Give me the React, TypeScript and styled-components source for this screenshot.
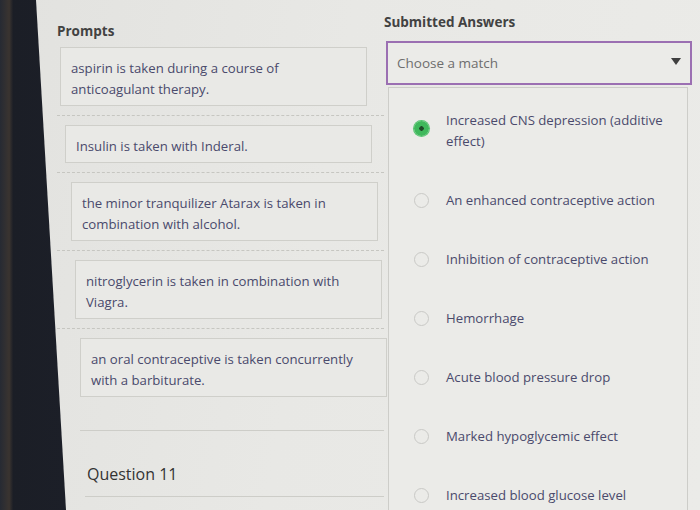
import * as React from "react";
import styled, { createGlobalStyle } from "styled-components";

const GlobalStyle = createGlobalStyle`
  html, body {
    margin: 0;
    padding: 0;
    background: #e6e6e3;
  }
  body {
    font-family: "Open Sans", "Liberation Sans", sans-serif;
  }
`;

const prompts = [
  { text: "aspirin is taken during a course of anticoagulant therapy.", indent: 3 },
  { text: "Insulin is taken with Inderal.", indent: 8 },
  { text: "the minor tranquilizer Atarax is taken in combination with alcohol.", indent: 14 },
  { text: "nitroglycerin is taken in combination with Viagra.", indent: 18 },
  { text: "an oral contraceptive is taken concurrently with a barbiturate.", indent: 23 },
];

const answers = [
  "Increased CNS depression (additive effect)",
  "An enhanced contraceptive action",
  "Inhibition of contraceptive action",
  "Hemorrhage",
  "Acute blood pressure drop",
  "Marked hypoglycemic effect",
  "Increased blood glucose level",
];

const Screen = styled.div`
  display: flex;
  width: 700px;
  height: 510px;
  overflow: hidden;
  background: linear-gradient(100deg, #e2e2df 0%, #e8e8e5 45%, #ebebe8 100%);
`;

const Bezel = styled.div`
  flex: 0 0 66px;
  height: 100%;
  background: linear-gradient(90deg, #262a33 0%, #3a3430 14%, #1b1e26 20%, #1c1f28 100%);
  clip-path: polygon(0 0, 36px 0, 66px 100%, 0 100%);
`;

const Main = styled.div`
  flex: 1;
  margin-left: -30px;
  display: grid;
  grid-template-columns: 348px 1fr;
`;

const LeftColumn = styled.div`
  padding: 22px 0 0 21px;
`;

const RightColumn = styled.div`
  padding-top: 13px;
`;

const Heading = styled.div`
  font-size: 13.5px;
  font-weight: 700;
  line-height: 18px;
  color: #424242;
`;

const PromptList = styled.div`
  margin-top: 7px;
`;

const PromptRow = styled.div<{ $indent: number }>`
  padding-left: ${(p) => p.$indent}px;
  padding-bottom: 9px;
  border-bottom: 1px dashed #c6c6c1;
  margin-bottom: 9px;
`;

const PromptBox = styled.div`
  width: 285px;
  padding: 10px 10px 5px;
  background: #e9e9e6;
  border: 1px solid #cfcfca;
  font-size: 13.2px;
  line-height: 21px;
  color: #4a4a6c;
`;

const LastRow = styled.div<{ $indent: number }>`
  margin-left: ${(p) => p.$indent}px;
  padding-bottom: 33px;
  border-bottom: 1px solid #cdcdc8;
`;

const QuestionRow = styled.div`
  padding: 32px 0 11px 2px;
  margin-left: 28px;
  border-bottom: 1px solid #cdcdc8;
  font-size: 16px;
  line-height: 22px;
  color: #333;
`;

const Select = styled.div`
  margin: 10px 0 0 2px;
  width: 306px;
  height: 44px;
  box-sizing: border-box;
  border: 2px solid #9b6fb2;
  display: flex;
  align-items: center;
  justify-content: space-between;
  padding: 0 9px;
  font-size: 13.5px;
  color: #6e6e6e;
  background: #ebebe8;
`;

const Caret = styled.span`
  width: 0;
  height: 0;
  border-left: 5px solid transparent;
  border-right: 5px solid transparent;
  border-top: 7px solid #3f3f3f;
  margin-bottom: 4px;
`;

const Listbox = styled.div`
  margin: 2px 0 0 4px;
  width: 300px;
  height: 440px;
  box-sizing: border-box;
  padding-top: 3px;
  background: #ebebe8;
  border: 1px solid #cdcdc9;
`;

const Option = styled.div`
  display: flex;
  align-items: center;
  padding: 19px 20px 19px 25px;
  gap: 17px;
  font-size: 13.2px;
  line-height: 21px;
  color: #4a4a6c;
`;

const Radio = styled.span<{ $checked?: boolean }>`
  flex: 0 0 auto;
  width: 15px;
  height: 15px;
  box-sizing: border-box;
  border-radius: 50%;
  border: ${(p) => (p.$checked ? "none" : "1.5px solid #c9c9c6")};
  background: ${(p) =>
    p.$checked ? "radial-gradient(circle, #1f4a2a 0 2px, #3fb85c 2.5px)" : "transparent"};
  box-shadow: ${(p) => (p.$checked ? "0 0 0 1px #58c571" : "none")};
  margin-top: ${(p) => (p.$checked ? "-6px" : "0")};
`;

const OptionText = styled.span`
  max-width: 230px;
`;

export default function App() {
  const last = prompts[prompts.length - 1];
  return (
    <>
      <GlobalStyle />
      <Screen>
        <Bezel />
        <Main>
          <LeftColumn>
            <Heading>Prompts</Heading>
            <PromptList>
              {prompts.slice(0, -1).map((p) => (
                <PromptRow key={p.text} $indent={p.indent}>
                  <PromptBox>{p.text}</PromptBox>
                </PromptRow>
              ))}
              <LastRow $indent={last.indent}>
                <PromptBox>{last.text}</PromptBox>
              </LastRow>
            </PromptList>
            <QuestionRow>Question 11</QuestionRow>
          </LeftColumn>
          <RightColumn>
            <Heading>Submitted Answers</Heading>
            <Select>
              <span>Choose a match</span>
              <Caret />
            </Select>
            <Listbox>
              {answers.map((a, i) => (
                <Option key={a}>
                  <Radio $checked={i === 0} />
                  <OptionText>{a}</OptionText>
                </Option>
              ))}
            </Listbox>
          </RightColumn>
        </Main>
      </Screen>
    </>
  );
}
